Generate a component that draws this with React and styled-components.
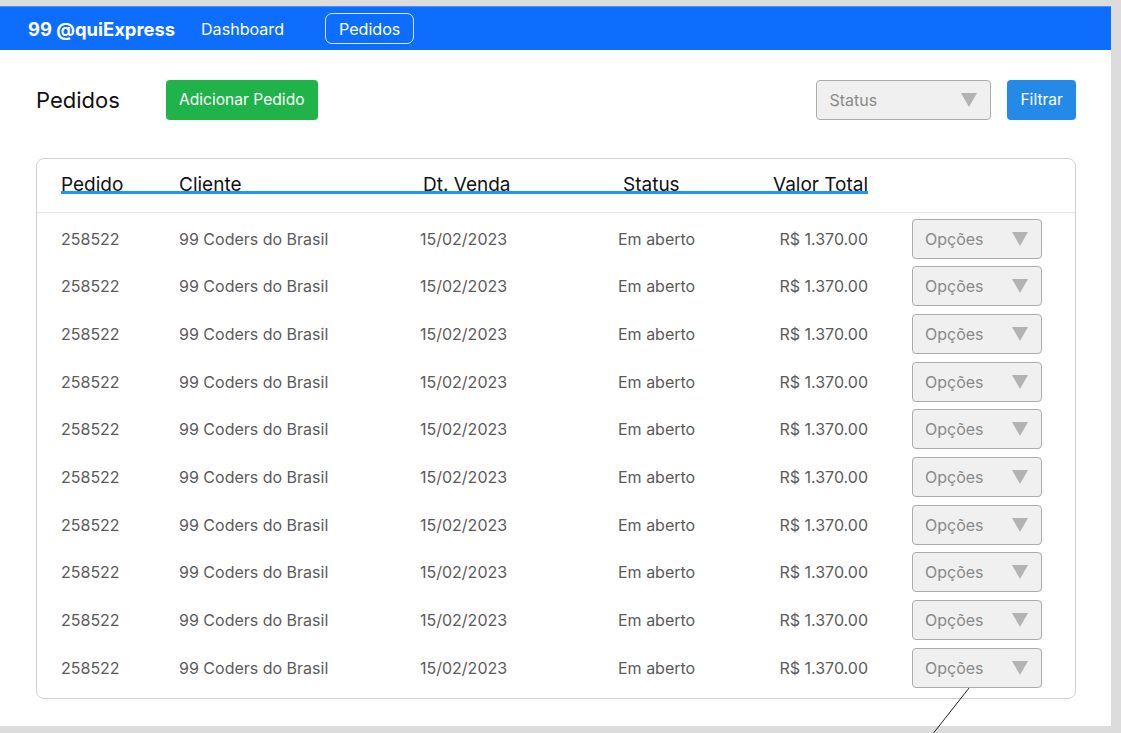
import React from "react";
import styled, { createGlobalStyle } from "styled-components";

const Global = createGlobalStyle`
  html, body { margin: 0; padding: 0; background: #dcdcdc; }
  body { font-family: Inter, "Noto Sans", sans-serif; overflow: hidden; }
  * { box-sizing: border-box; }
`;

const Page = styled.div`
  position: relative;
  width: 1121px;
  height: 733px;
  padding-top: 6px;
`;

const Frame = styled.div`
  width: 1111px;
  height: 720px;
  background: #ffffff;
  display: flex;
  flex-direction: column;
`;

const NavBar = styled.nav`
  height: 44px;
  background: #0d6efd;
  border-top: 1px solid #4a8ffb;
  display: flex;
  align-items: center;
  padding-left: 28px;
`;

const Brand = styled.span`
  color: #fff;
  font-weight: 700;
  font-size: 18.4px;
  margin-right: 25px;
`;

const NavLink = styled.span`
  color: #fff;
  font-size: 16.1px;
  height: 31px;
  display: flex;
  align-items: center;
  padding: 0 ${(p) => (p.$active ? "13px" : "0")};
  border-radius: 7px;
  border: 1px solid ${(p) => (p.$active ? "rgba(255,255,255,0.85)" : "transparent")};
  margin-left: ${(p) => (p.$active ? "40px" : "0")};
`;

const Content = styled.main`
  padding: 29px 35px 0 36px;
  display: flex;
  flex-direction: column;
`;

const Toolbar = styled.div`
  display: flex;
  align-items: center;
  height: 41px;
`;

const Title = styled.h1`
  margin: 0;
  font-size: 22px;
  font-weight: 400;
  color: #111;
  width: 130px;
`;

const Button = styled.button`
  height: 40px;
  border: none;
  border-radius: 4px;
  color: #fff;
  font-family: inherit;
  font-size: 15.6px;
  padding: 0 13px;
  background: ${(p) => p.$bg};
`;

const Spacer = styled.div`
  flex: 1;
`;

const Select = styled.div`
  width: ${(p) => p.$w}px;
  height: ${(p) => p.$h}px;
  background: #f0f0f0;
  border: 1px solid #acacac;
  border-radius: 4px;
  display: flex;
  align-items: center;
  justify-content: space-between;
  padding: 0 13px 0 12px;
  color: #8a8a8a;
  font-size: 16px;
  margin-right: ${(p) => p.$mr || 0}px;
`;

const Caret = () => (
  <svg width="16" height="14" viewBox="0 0 16 14">
    <polygon points="0,0 16,0 8,14" fill="#b3b3b3" />
  </svg>
);

const Card = styled.section`
  margin-top: 38px;
  border: 1px solid #d2d2d2;
  border-radius: 8px;
  height: 541px;
  display: flex;
  flex-direction: column;
`;

const HeaderArea = styled.div`
  height: 54px;
  border-bottom: 1px solid #e6e6e6;
  padding: 12px 0 0 24px;
`;

const HeaderLine = styled.div`
  width: 807px;
  height: 23px;
  overflow: hidden;
  border-bottom: 3px solid #1f98f2;
  display: grid;
  grid-template-columns: 118px 241px 198px 155px 95px;
`;

const HeaderCell = styled.div`
  font-size: 19px;
  line-height: 28px;
  color: #111;
  padding-left: ${(p) => p.$off || 0}px;
  white-space: nowrap;
`;

const Body = styled.div`
  padding: 2px 0 0 24px;
  display: flex;
  flex-direction: column;
`;

const Row = styled.div`
  height: 47.67px;
  display: grid;
  grid-template-columns: 118px 241px 198px 155px 95px 44px 130px;
  align-items: center;
`;

const Cell = styled.div`
  font-size: 16px;
  color: #5b5b5b;
  white-space: nowrap;
  text-align: ${(p) => p.$align || "left"};
`;

const Annotation = styled.svg`
  position: absolute;
  left: 0;
  top: 0;
  pointer-events: none;
`;

const rows = Array.from({ length: 10 }, () => ({
  id: "258522",
  cliente: "99 Coders do Brasil",
  data: "15/02/2023",
  status: "Em aberto",
  valor: "R$ 1.370.00",
}));

export default function App() {
  return (
    <Page>
      <Global />
      <Frame>
        <NavBar>
          <Brand>99 @quiExpress</Brand>
          <NavLink>Dashboard</NavLink>
          <NavLink $active>Pedidos</NavLink>
        </NavBar>
        <Content>
          <Toolbar>
            <Title>Pedidos</Title>
            <Button $bg="#1fb34a">Adicionar Pedido</Button>
            <Spacer />
            <Select $w={175} $h={40} $mr={16}>
              <span>Status</span>
              <Caret />
            </Select>
            <Button $bg="#2589e7">Filtrar</Button>
          </Toolbar>
          <Card>
            <HeaderArea>
              <HeaderLine>
                <HeaderCell>Pedido</HeaderCell>
                <HeaderCell $off={-1}>Cliente</HeaderCell>
                <HeaderCell $off={3}>Dt. Venda</HeaderCell>
                <HeaderCell $off={5}>Status</HeaderCell>
                <HeaderCell>Valor Total</HeaderCell>
              </HeaderLine>
            </HeaderArea>
            <Body>
              {rows.map((r, i) => (
                <Row key={i}>
                  <Cell>{r.id}</Cell>
                  <Cell>{r.cliente}</Cell>
                  <Cell>{r.data}</Cell>
                  <Cell>{r.status}</Cell>
                  <Cell $align="right">{r.valor}</Cell>
                  <span />
                  <Select $w={130} $h={40}>
                    <span>Opções</span>
                    <Caret />
                  </Select>
                </Row>
              ))}
            </Body>
          </Card>
        </Content>
      </Frame>
      <Annotation width="1121" height="733">
        <line x1="969" y1="688" x2="932" y2="735" stroke="#222" strokeWidth="1" />
      </Annotation>
    </Page>
  );
}
